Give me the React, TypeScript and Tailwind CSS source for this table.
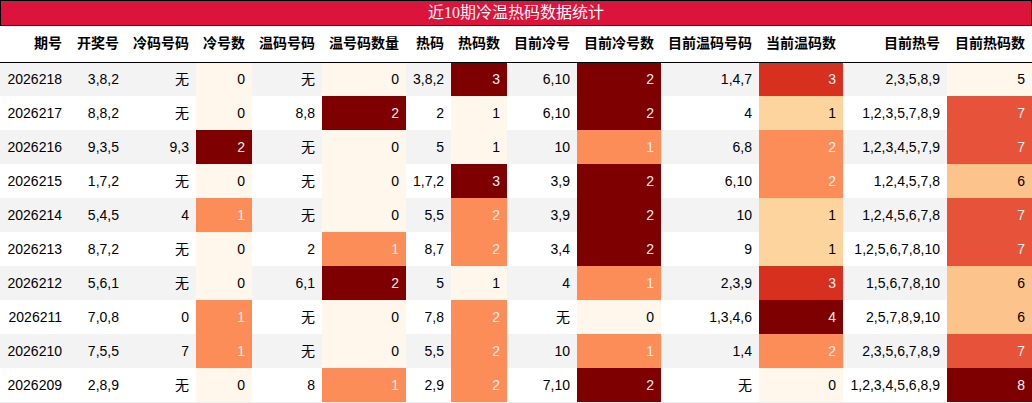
import React from 'react';

const cols = [
  { name: '期号', w: 69 },
  { name: '开奖号', w: 57 },
  { name: '冷码号码', w: 70 },
  { name: '冷号数', w: 56 },
  { name: '温码号码', w: 70 },
  { name: '温号码数量', w: 84 },
  { name: '热码', w: 45 },
  { name: '热码数', w: 56 },
  { name: '目前冷号', w: 70 },
  { name: '目前冷号数', w: 84 },
  { name: '目前温码号码', w: 98 },
  { name: '当前温码数', w: 84 },
  { name: '目前热号', w: 104 },
  { name: '目前热码数', w: 85 },
];

type Row = (string | number)[];

const rows: Row[] = [
  ['2026218', '3,8,2', '无', 0, '无', 0, '3,8,2', 3, '6,10', 2, '1,4,7', 3, '2,3,5,8,9', 5],
  ['2026217', '8,8,2', '无', 0, '8,8', 2, '2', 1, '6,10', 2, '4', 1, '1,2,3,5,7,8,9', 7],
  ['2026216', '9,3,5', '9,3', 2, '无', 0, '5', 1, '10', 1, '6,8', 2, '1,2,3,4,5,7,9', 7],
  ['2026215', '1,7,2', '无', 0, '无', 0, '1,7,2', 3, '3,9', 2, '6,10', 2, '1,2,4,5,7,8', 6],
  ['2026214', '5,4,5', '4', 1, '无', 0, '5,5', 2, '3,9', 2, '10', 1, '1,2,4,5,6,7,8', 7],
  ['2026213', '8,7,2', '无', 0, '2', 1, '8,7', 2, '3,4', 2, '9', 1, '1,2,5,6,7,8,10', 7],
  ['2026212', '5,6,1', '无', 0, '6,1', 2, '5', 1, '4', 1, '2,3,9', 3, '1,5,6,7,8,10', 6],
  ['2026211', '7,0,8', '0', 1, '无', 0, '7,8', 2, '无', 0, '1,3,4,6', 4, '2,5,7,8,9,10', 6],
  ['2026210', '7,5,5', '7', 1, '无', 0, '5,5', 2, '10', 1, '1,4', 2, '2,3,5,6,7,8,9', 7],
  ['2026209', '2,8,9', '无', 0, '8', 1, '2,9', 2, '7,10', 2, '无', 0, '1,2,3,4,5,6,8,9', 8],
];

// OrRd gradient steps, per column (min -> max)
const gradients: Record<number, Record<number, string>> = {
  3: { 0: 'bg-[#fff7ec] text-[#000]', 1: 'bg-[#fc8d59] text-[#f1f1f1]', 2: 'bg-[#7f0000] text-[#f1f1f1]' },
  5: { 0: 'bg-[#fff7ec] text-[#000]', 1: 'bg-[#fc8d59] text-[#f1f1f1]', 2: 'bg-[#7f0000] text-[#f1f1f1]' },
  7: { 1: 'bg-[#fff7ec] text-[#000]', 2: 'bg-[#fc8d59] text-[#f1f1f1]', 3: 'bg-[#7f0000] text-[#f1f1f1]' },
  9: { 0: 'bg-[#fff7ec] text-[#000]', 1: 'bg-[#fc8d59] text-[#f1f1f1]', 2: 'bg-[#7f0000] text-[#f1f1f1]' },
  11: {
    0: 'bg-[#fff7ec] text-[#000]',
    1: 'bg-[#fdd49e] text-[#000]',
    2: 'bg-[#fc8d59] text-[#f1f1f1]',
    3: 'bg-[#d7301f] text-[#f1f1f1]',
    4: 'bg-[#7f0000] text-[#f1f1f1]',
  },
  13: {
    5: 'bg-[#fff7ec] text-[#000]',
    6: 'bg-[#fdc38d] text-[#000]',
    7: 'bg-[#e7533a] text-[#f1f1f1]',
    8: 'bg-[#7f0000] text-[#f1f1f1]',
  },
};

export default function App() {
  return (
    <div className="w-[1032px] h-[403px] bg-white overflow-hidden font-['Liberation_Sans','Noto_Sans_CJK_SC',sans-serif]">
      <div className="h-[26px] border border-black bg-[#dc143c] text-white text-center text-[16px] leading-[24px] font-['Liberation_Serif','Noto_Sans_CJK_SC',serif]">
        近10期冷温热码数据统计
      </div>
      <table className="table-fixed border-collapse w-[1032px]">
        <colgroup>
          {cols.map((c) => (
            <col key={c.name} style={{ width: c.w }} />
          ))}
        </colgroup>
        <thead>
          <tr className="h-[36px] border-b border-black">
            {cols.map((c) => (
              <th key={c.name} className="px-[7px] text-right text-[14px] font-bold text-[#000] whitespace-nowrap">
                {c.name}
              </th>
            ))}
          </tr>
        </thead>
        <tbody>
          {rows.map((r, i) => (
            <tr key={i} className={`h-[34px] ${i % 2 === 0 ? 'bg-[#f3f3f3]' : 'bg-white'}`}>
              {r.map((v, j) => {
                const g = gradients[j];
                const cls = g ? g[v as number] : 'text-[#000]';
                return (
                  <td key={j} className={`px-[7px] text-right text-[14px] whitespace-nowrap ${cls}`}>
                    {v}
                  </td>
                );
              })}
            </tr>
          ))}
        </tbody>
      </table>
      <div className="h-px bg-[#eeeeee]" />
    </div>
  );
}
